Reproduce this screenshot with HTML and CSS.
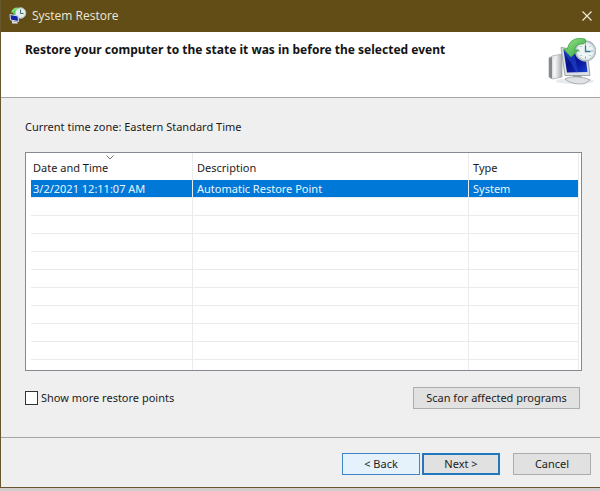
FILE: index.html
```html
<!DOCTYPE html>
<html lang="en">
<head>
<meta charset="utf-8">
<title>System Restore</title>
<link rel="stylesheet" href="styles.css">
</head>
<body>
<svg class="defs" aria-hidden="true">
  <defs>
    <linearGradient id="screen" x1="0" y1="0" x2="1" y2="1">
      <stop offset="0" stop-color="#1a35c4"/><stop offset=".4" stop-color="#06108c"/><stop offset=".7" stop-color="#0c1fa6"/><stop offset="1" stop-color="#1c46cc"/>
    </linearGradient>
    <linearGradient id="metal" x1="0" y1="0" x2="1" y2="0">
      <stop offset="0" stop-color="#c9cbcd"/><stop offset=".5" stop-color="#f0f1f2"/><stop offset="1" stop-color="#a8acaf"/>
    </linearGradient>
    <linearGradient id="leaf" x1="0" y1="0" x2="1" y2="1">
      <stop offset="0" stop-color="#9be48c"/><stop offset="1" stop-color="#2fa53a"/>
    </linearGradient>
  </defs>
</svg>
<main class="window">
  <header class="titlebar">
    <svg class="app-icon" viewBox="0 0 18 18" aria-hidden="true">
      <path d="M4 6C4 3 6 1 9 .500L10 7 6 10Z" fill="#52cf50"/>
      <circle cx="11.500" cy="6" r="5.300" fill="#e2eeee" stroke="#a9bdbc"/>
      <path d="M11.500 2.500V6.500H14.500" fill="none" stroke="#3d6d66"/>
      <path d="M3 5.500C4 3 6 1.500 8 1.500" fill="none" stroke="#7be370" stroke-width="2"/>
      <path d="M1 7.500 9 9 9.500 14.500 1.500 13Z" fill="#1524a6" stroke="#d7e0f1"/>
      <path d="M3 14 8 15 9 16.500H3Z" fill="#dfe3ea"/>
    </svg>
    <h1 class="title">System Restore</h1>
    <button class="close" type="button" aria-label="Close">
      <svg viewBox="0 0 10 10" aria-hidden="true"><path d="M.5.5 9.500 9.500M9.500.5.5 9.500" fill="none" stroke="#eee9dc" stroke-width="1.200"/></svg>
    </button>
  </header>
  <section class="banner">
    <h2>Restore your computer to the state it was in before the selected event</h2>
    <svg class="restore-icon" viewBox="0 0 48 48" aria-hidden="true">
      <ellipse cx="27" cy="44" rx="19" ry="3" fill="#e8e9ea"/>
      <path d="M1 21 4 19 14 17V40L5 42 1 40Z" fill="url(#metal)" stroke="#a4a8ab" stroke-width=".7"/>
      <path d="M1 21 4 20V42L1 40Z" fill="#85898c"/>
      <path d="M6 23V39" stroke="#fff" fill="none"/>
      <path d="M25 37 33 37 34 43 25 42Z" fill="#9ca2a7"/>
      <path d="M17 42C21 39 35 39 42 43L37 46.500C30 48 21 46 17 42Z" fill="#dfe1e3" stroke="#92989c" stroke-width=".7"/>
      <path d="M13 10.500 39 14 42 38.500 17 38.500Z" fill="#dce0e3" stroke="#8d9499" stroke-width=".8"/>
      <path d="M15.500 13 37 16 39.500 35 19 35.500Z" fill="url(#screen)"/>
      <path d="M15.500 13 26 14.500 30 35.200 28 35.300Z" fill="#2d58dc" opacity=".45"/>
      <circle cx="37.500" cy="14" r="10" fill="#dde6e9" stroke="#aab7bb" stroke-width="1.400"/>
      <circle cx="37.500" cy="14" r="8.200" fill="#edf5f7" stroke="#c7d7dc" stroke-width=".6"/>
      <path d="M37.500 6.500V8.500M37.500 19.500V21.500M30 14H32M43 14H45M32.500 9 33.500 10M42.500 9 41.500 10M32.500 19 33.500 18M42.500 19 41.500 18" stroke="#86a4ad" fill="none"/>
      <path d="M37.500 8.500V14.500H42.500" fill="none" stroke="#3a7b86" stroke-width="1.300"/>
      <path d="M37 2C28 0 21 3 19.500 12L15.500 12 23 20 30.500 13 26.500 13C27.500 8 31 6.500 35 7L38 5Z" fill="url(#leaf)" stroke="#35a33e" stroke-width=".8"/>
    </svg>
  </section>
  <section class="content">
    <p class="zone">Current time zone: Eastern Standard Time</p>
    <div class="list">
      <table>
        <colgroup><col class="col-date"><col class="col-desc"><col class="col-type"></colgroup>
        <thead>
          <tr>
            <th scope="col" aria-sort="descending">Date and Time<svg class="sort" viewBox="0 0 8 5" aria-hidden="true"><path d="M.5.5 4 4 7.500.5" fill="none" stroke="#777"/></svg></th>
            <th scope="col">Description</th>
            <th scope="col">Type</th>
          </tr>
        </thead>
        <tbody>
          <tr class="selected"><td>3/2/2021 12:11:07 AM</td><td>Automatic Restore Point</td><td>System</td></tr>
          <tr><td></td><td></td><td></td></tr>
          <tr><td></td><td></td><td></td></tr>
          <tr><td></td><td></td><td></td></tr>
          <tr><td></td><td></td><td></td></tr>
          <tr><td></td><td></td><td></td></tr>
          <tr><td></td><td></td><td></td></tr>
          <tr><td></td><td></td><td></td></tr>
          <tr><td></td><td></td><td></td></tr>
          <tr><td></td><td></td><td></td></tr>
          <tr class="last"><td></td><td></td><td></td></tr>
        </tbody>
      </table>
    </div>
    <div class="options">
      <label class="check"><input type="checkbox">Show more restore points</label>
      <button class="btn scan" type="button">Scan for affected programs</button>
    </div>
  </section>
  <footer class="actions">
    <button class="btn back" type="button">&lt; Back</button>
    <button class="btn next" type="button">Next &gt;</button>
    <button class="btn cancel" type="button">Cancel</button>
  </footer>
</main>
</body>
</html>
```
FILE: styles.css
```css
* { box-sizing: border-box; }

body {
  margin: 0;
  min-height: 100vh;
  padding-bottom: 3px;
  display: flex;
  background: #d0cdcc;
  color: #1c1c1c;
  font: 11px/16px "Noto Sans", sans-serif;
}

h1, h2, p { margin: 0; }

button { font: inherit; color: inherit; }

.defs { position: absolute; width: 0; height: 0; }

.window {
  flex: 1;
  min-width: 0;
  display: flex;
  flex-direction: column;
  background: #efefef;
  border: solid #66572f;
  border-width: 0 0 1px 1px;
}

.titlebar {
  display: flex;
  align-items: center;
  height: 32px;
  padding: 0 8px;
  background: #624d17;
  color: #eee7d8;
}

.app-icon { width: 18px; height: 18px; margin-right: 5px; }

.title {
  flex: 1;
  font: 12px/16px "Open Sans", sans-serif;
}

.close {
  display: flex;
  padding: 0;
  border: 0;
  background: none;
}

.close svg { width: 10px; height: 10px; }

.banner {
  display: flex;
  justify-content: space-between;
  height: 66px;
  padding: 5px 4px 0 24px;
  background: #fff;
  border-bottom: 1px solid #a6a6a6;
}

.banner h2 {
  padding-top: 5px;
  color: #141414;
  font: bold 12px/16px "Noto Sans", sans-serif;
}

.restore-icon { flex: none; width: 48px; height: 48px; }

.content {
  flex: 1;
  padding: 21px 18px 0 24px;
}

.zone { margin-bottom: 17px; }

.list {
  padding: 0 2px 0 5px;
  background: #fff;
  border: 1px solid #858991;
}

table {
  width: 100%;
  table-layout: fixed;
  border-collapse: separate;
  border-spacing: 0;
}

.col-date { width: 162px; }
.col-type { width: 110px; }

th, td {
  height: 18px;
  padding: 0 4px 0 2px;
  border-right: 1px solid #e9ebec;
  border-bottom: 1px solid #e9ebec;
  text-align: left;
  font-weight: normal;
  white-space: nowrap;
}

th + th, td + td { padding-left: 4px; }

th {
  position: relative;
  height: 27px;
  padding-top: 2px;
  border-bottom: 0;
}

.sort {
  position: absolute;
  top: 2px;
  left: 50%;
  width: 8px;
  height: 5px;
  margin-left: -6px;
}

.selected td {
  background: #0078d7;
  color: #e8f4ff;
}

.last td { height: 10px; border-bottom: 0; }

.options {
  display: flex;
  align-items: center;
  justify-content: space-between;
  padding: 16px 2px 0 0;
}

.check { display: flex; align-items: center; gap: 3px; }

.check input {
  appearance: none;
  width: 13px;
  height: 14px;
  margin: 0;
  background: #fff;
  border: 1px solid #333;
}

.check input:checked { background: #0078d7; }

.btn {
  width: 78px;
  height: 22px;
  padding: 0;
  background: #e1e1e1;
  border: 1px solid #adadad;
  white-space: nowrap;
}

.btn.scan { width: 167px; }

.actions {
  display: flex;
  justify-content: flex-end;
  gap: 2px;
  height: 50px;
  padding: 15px 9px 0;
  border-top: 1px solid #a6a6a6;
}

.back { background: #e5f1fb; border-color: #3c86c8; }
.next { border: 2px solid #2476bd; }
.cancel { margin-left: 11px; }
```
